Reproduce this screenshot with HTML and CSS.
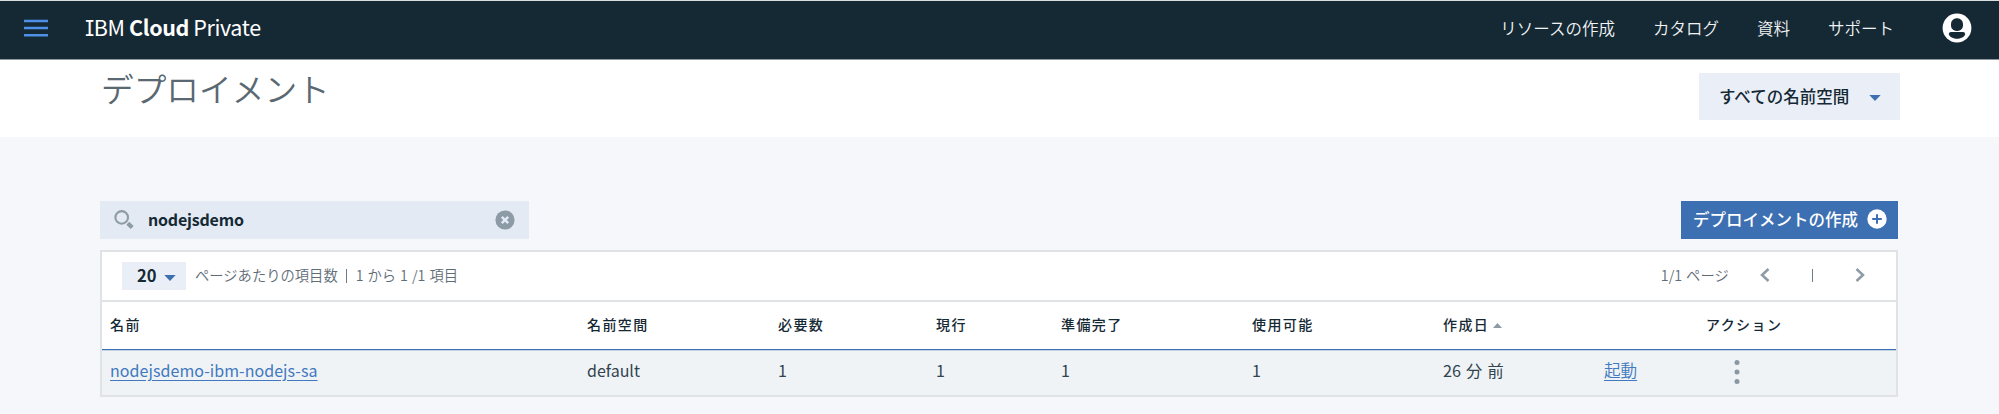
FILE: index.html
```html
<!DOCTYPE html>
<html lang="ja">
<head>
<meta charset="utf-8">
<title>IBM Cloud Private</title>
<link rel="stylesheet" href="styles.css">
</head>
<body>
<header class="topbar">
  <svg class="menu" width="24" height="18" viewBox="0 0 24 18"><path d="M0 2h24M0 9h24M0 16.200h24" stroke="#4e8fe8" stroke-width="2.400"/></svg>
  <div class="brand"><span class="brand-i">I</span>BM <b>Cloud</b> Private</div>
  <nav class="nav"><a>リソースの作成</a><a>カタログ</a><a>資料</a><a>サポート</a></nav>
  <svg class="avatar" width="30" height="30" viewBox="0 0 30 30"><circle cx="15" cy="15" r="14.400" fill="#fff"/><rect x="9" y="5.300" width="12" height="12.600" rx="5.500" fill="#152935"/><path d="M9 19h12q2.200 0 2.200 2c0 2-3.700 4.800-8.200 4.800S6.800 23 6.800 21q0-2 2.200-2z" fill="#152935"/></svg>
</header>
<section class="heading">
  <h1>デプロイメント</h1>
  <div class="namespace"><span>すべての名前空間</span><svg width="12" height="6" viewBox="0 0 12 6"><path d="M.3 0h11.400L6 6z" fill="#3d70b2"/></svg></div>
</section>
<main class="content">
  <div class="tools">
    <div class="search">
      <svg class="search-icon" width="20" height="20" viewBox="0 0 20 20" fill="none" stroke="#8c9ba5"><circle cx="7.700" cy="7.400" r="6.300" stroke-width="2.100"/><path d="M13.800 13.200l4.400 4.200" stroke-width="4.200"/></svg>
      <span class="query">nodejsdemo</span>
      <svg class="clear" width="20" height="20" viewBox="0 0 20 20"><circle cx="10" cy="10" r="9.600" fill="#8c9ba5"/><path d="M6.800 6.800l6.400 6.400M13.200 6.800l-6.400 6.400" stroke="#e3eaf3" stroke-width="2.400"/></svg>
    </div>
    <div class="create"><span>デプロイメントの作成</span><svg width="20" height="20" viewBox="0 0 20 20"><circle cx="10" cy="10" r="9.700" fill="#fff"/><path d="M10 5.200v9.600M5.200 10h9.600" stroke="#3d70b2" stroke-width="2"/></svg></div>
  </div>
  <div class="table">
    <div class="pager">
      <div class="size"><span>20</span><svg width="12" height="6" viewBox="0 0 12 6"><path d="M.3 0h11.400L6 6z" fill="#3d70b2"/></svg></div>
      <span class="count">ページあたりの項目数</span><span class="bar"></span><span class="range">1 から 1 /1 項目</span>
      <span class="pages">1/1 ページ</span>
      <svg class="prev" width="10" height="14" viewBox="0 0 10 14"><path d="M8.500 1L2 7l6.500 6" fill="none" stroke="#8c9ba5" stroke-width="2.500"/></svg>
      <span class="divider"></span>
      <svg class="next" width="10" height="14" viewBox="0 0 10 14"><path d="M1.500 1L8 7l-6.500 6" fill="none" stroke="#8c9ba5" stroke-width="2.500"/></svg>
    </div>
    <div class="row head">
      <span>名前</span><span>名前空間</span><span>必要数</span><span>現行</span><span>準備完了</span><span>使用可能</span>
      <span>作成日<svg class="sort" width="9" height="5" viewBox="0 0 9 5"><path d="M0 5h9L4.500 0z" fill="#8c9ba5"/></svg></span><span></span><span>アクション</span>
    </div>
    <div class="row data">
      <span><a class="link name">nodejsdemo-ibm-nodejs-sa</a></span><span class="ns">default</span><span>1</span><span>1</span><span>1</span><span>1</span><span class="age">26 分 前</span><span><a class="link launch">起動</a></span>
      <span class="more"><svg width="6" height="26" viewBox="0 0 6 26" fill="#8897a2"><circle cx="3" cy="3.500" r="2.500"/><circle cx="3" cy="13" r="2.500"/><circle cx="3" cy="22.500" r="2.500"/></svg></span>
    </div>
  </div>
</main>
</body>
</html>
```
FILE: styles.css
```css
* { box-sizing: border-box; }
body {
  margin: 0;
  height: 414px;
  overflow: hidden;
  background: #f5f7fb;
  color: #152935;
  font-family: "Noto Sans CJK JP", "Noto Sans", sans-serif;
  font-size: 16px;
  line-height: 24px;
}
svg { display: block; flex: none; }
span, a, b { white-space: nowrap; }
.topbar {
  display: flex;
  align-items: center;
  height: 60px;
  padding: 0 27px 4px 24px;
  background: #152935;
  border-top: 1px solid #d9dee0;
  border-bottom: 1px solid #8d989e;
  color: #f0f2f3;
}
.brand { margin-left: 37px; font-size: 21.5px; letter-spacing: -0.4px; white-space: nowrap; color: #fff; }
.brand-i { font-family: "Inter"; font-size: 21px; font-feature-settings: "cv08"; }
.nav { display: flex; gap: 38px; margin-left: auto; font-size: 16.5px; font-weight: 350; }
.avatar { margin-left: 48px; }
.heading {
  display: flex;
  justify-content: space-between;
  height: 77px;
  padding: 13px 99px 0 101px;
  background: #fff;
}
h1 { margin: -7px 0 0; font-size: 32.7px; line-height: 44px; font-weight: 350; color: #5a6872; }
.namespace {
  display: flex;
  align-items: center;
  width: 201px;
  height: 47px;
  padding: 0 19px 0 20px;
  background: #eaeff7;
  justify-content: space-between;
  font-size: 16.5px;
  font-weight: 500;
}
.namespace span { margin-top: -2px; }
.namespace svg { margin-top: 3px; }
.content { padding: 64px 101px 0 100px; }
.tools { display: flex; justify-content: space-between; height: 38px; }
.search { display: flex; align-items: center; width: 429px; padding: 0 14px; background: #e3eaf3; }
.query { margin: -3px 0 0 14px; font-weight: 700; letter-spacing: -.2px; }
.clear { margin-left: auto; }
.create {
  display: flex;
  align-items: center;
  justify-content: space-between;
  width: 217px;
  padding: 0 11px 2px 12px;
  background: #3d70b2;
  color: #fff;
  font-size: 16.5px;
  font-weight: 500;
}
.create span { margin-top: -1px; }
.table { margin-top: 11px; height: 147px; background: #fff; border: 2px solid #dfe3e6; }
.pager {
  display: flex;
  align-items: center;
  height: 50px;
  padding: 0 31px 0 20px;
  border-bottom: 2px solid #dfe3e6;
  font-size: 14.3px;
  font-weight: 350;
  color: #5f6d77;
}
.size {
  display: flex;
  align-items: center;
  width: 64px;
  height: 28px;
  padding-left: 15px;
  background: #eaeff7;
  color: #152935;
  font-size: 16.5px;
  font-weight: 700;
}
.size span { margin-top: -2px; }
.size svg { margin: 3px 0 0 8px; }
.count { margin: -3px 0 0 9px; }
.bar { width: 1px; height: 14px; margin: -1px 9px 0 8px; background: #6f7c85; }
.range { margin-top: -3px; word-spacing: .8px; }
.pages { margin: -3px 31px 0 auto; word-spacing: .5px; letter-spacing: .1px; }
.prev { margin-top: -3px; }
.divider { width: 1px; height: 13px; margin: -1px 42px 0; background: #6f7c85; }
.next { margin-top: -3px; }
.row {
  display: grid;
  grid-template-columns: 477px 191px 158px 125px 191px 191px 161px 102px 1fr;
  align-items: center;
  padding-left: 8px;
}
.head { height: 48px; padding-bottom: 4px; border-bottom: 1px solid #3d70b2; font-size: 14px; font-weight: 500; letter-spacing: 1.4px; }
.sort { display: inline-block; margin-left: 4px; vertical-align: 2px; }
.data { height: 45px; padding-bottom: 6px; background: #eff3f6; border-top: 1px solid #c3d3e6; color: #31434e; }
.link { color: #4178be; text-decoration: underline; text-underline-offset: 3px; }
.name { letter-spacing: .06px; }
.age { word-spacing: 1.5px; font-size: 16.2px; }
.launch { font-size: 16.6px; font-weight: 350; }
.more { padding: 4px 0 0 28px; }
```
